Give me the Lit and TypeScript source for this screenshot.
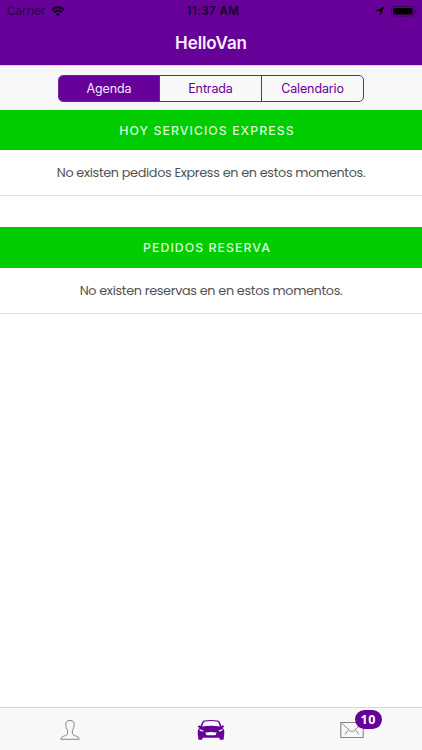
import { LitElement, html, css } from "lit";
import { customElement, state } from "lit/decorators.js";

@customElement("app-root")
export class AppRoot extends LitElement {
  @state() private segment = "Agenda";

  static styles = css`
    :host {
      display: flex;
      flex-direction: column;
      height: 100vh;
      overflow: hidden;
      background: #fff;
      font-family: Inter, "Liberation Sans", sans-serif;
    }
    * { box-sizing: border-box; }
    svg { display: block; }
    header { height: 65px; flex: none; background: #660099; }
    .status {
      height: 22px;
      display: grid;
      grid-template-columns: 1fr auto 1fr;
      align-items: center;
      padding: 0 5px 0 7px;
      font-size: 11.5px;
      color: #18002a;
    }
    .left, .right { display: flex; align-items: center; }
    .carrier { letter-spacing: 0.1px; color: #28043c; }
    .left svg { margin-left: 6px; }
    .right { justify-content: flex-end; gap: 6px; }
    .time { font-weight: 600; font-size: 11.5px; letter-spacing: 0.45px; padding-left: 2px; }
    h1 {
      margin: 0;
      height: 43px;
      line-height: 42px;
      text-align: center;
      font-size: 17px;
      font-weight: 600;
      letter-spacing: -0.1px;
      color: #f8eefc;
    }
    .segments {
      height: 45px;
      flex: none;
      display: flex;
      justify-content: center;
      align-items: center;
      background: #f8f8f8;
      border-top: 1px solid #e2cdec;
    }
    .group {
      display: grid;
      grid-template-columns: 100px 102px 102px;
      width: 306px;
      height: 27px;
      border: 1px solid #71219d;
      border-radius: 5px;
      overflow: hidden;
    }
    .group button {
      border: 0;
      padding: 1px 0 0;
      margin: 0;
      background: transparent;
      font: 400 12.5px Inter, "Liberation Sans", sans-serif;
      letter-spacing: -0.12px;
      color: #660099;
    }
    .group button + button { border-left: 1px solid #71219d; }
    .group .active { background: #660099; color: #f4e8fa; }
    main { flex: 1; }
    h2 {
      margin: 0;
      height: 40px;
      padding-right: 8px;
      line-height: 41px;
      background: #00cc00;
      color: #d9fbd9;
      text-align: center;
      font-size: 12.3px;
      font-weight: 500;
      letter-spacing: 1.05px;
      text-transform: uppercase;
    }
    section + section { margin-top: 31px; }
    section + section h2 { height: 41px; line-height: 42px; }
    p {
      margin: 0;
      height: 46px;
      line-height: 45px;
      border-bottom: 1px solid #e4e4e4;
      text-align: center;
      font-family: Poppins, Inter, sans-serif;
      font-size: 12.8px;
      letter-spacing: -0.33px;
      color: #525252;
    }
    nav {
      flex: none;
      height: 43px;
      display: grid;
      grid-template-columns: repeat(3, 1fr);
      justify-items: center;
      background: #f8f8f8;
      border-top: 1px solid #d9d9d9;
    }
    .tab { position: relative; padding-top: 11px; }
    .badge {
      position: absolute;
      left: 15px;
      top: 2px;
      width: 27px;
      height: 19px;
      border-radius: 10px;
      background: #660099;
      color: #fff;
      font: 700 12.5px/19px "Open Sans", "Noto Sans", sans-serif;
      letter-spacing: 0.4px;
      text-align: center;
    }
  `;

  render() {
    return html`
      <header>
        <div class="status">
          <div class="left">
            <span class="carrier">Carrier</span>
            <svg width="14" height="11" viewBox="0 0 14 11" fill="none" stroke="#14001f">
              <path d="M.8 4Q7-1.8 13.2 4M3 6.3Q7 2.6 11 6.3" stroke-width="2" />
              <path d="M4.7 8Q7 6 9.3 8L7 10.3Z" fill="#14001f" stroke="none" />
            </svg>
          </div>
          <span class="time">11:37 AM</span>
          <div class="right">
            <svg width="10" height="10" viewBox="0 0 10 10"><path d="M9.5.5 5.2 9.6V4.9H.5Z" fill="#000" /></svg>
            <svg width="26" height="11" viewBox="0 0 26 11">
              <rect x=".5" y=".5" width="22.5" height="9.6" rx="2" fill="none" stroke="#3a0759" />
              <rect x="2" y="2" width="19.5" height="6.6" rx=".7" fill="#000" />
              <path d="M24.2 3.6q1.5.3 1.5 1.7t-1.5 1.7Z" fill="#3a0759" />
            </svg>
          </div>
        </div>
        <h1>HelloVan</h1>
      </header>
      <div class="segments">
        <div class="group">
          ${["Agenda", "Entrada", "Calendario"].map(
            (name) => html`<button class=${name === this.segment ? "active" : ""}
              @click=${() => (this.segment = name)}>${name}</button>`
          )}
        </div>
      </div>
      <main>
        <section>
          <h2>Hoy servicios express</h2>
          <p>No existen pedidos Express en en estos momentos.</p>
        </section>
        <section>
          <h2>Pedidos reserva</h2>
          <p>No existen reservas en en estos momentos.</p>
        </section>
      </main>
      <nav>
        <div class="tab">
          <svg width="20" height="22" viewBox="0 0 20 22" fill="none" stroke="#858585" stroke-width="1">
            <path d="M10 1.500C7 1.500 5.600 3.200 5.800 5.800 6 8 6.400 9.500 7.600 11.500V14.500C7.600 17.200 1.300 16.200.8 20.300H19.200C18.700 16.200 12.400 17.200 12.400 14.500V11.500C13.600 9.500 14 8 14.200 5.800 14.400 3.200 13 1.500 10 1.500Z" />
          </svg>
        </div>
        <div class="tab">
          <svg width="28" height="22" viewBox="0 0 28 22">
            <path fill="#660099" d="M3.300 7.300 5.300 2.900Q5.900 1.600 7.200 1.400 14 .5 20.800 1.400q1.300.2 1.900 1.500L24.700 7.300Q25 6.400 26.300 6.600q1 .2.900 1.100-.2.800-1.600.8 1.700 2 1.700 4.800 0 3-.5 4.700V19.700q0 1-1 1H23.500q-1 0-1-1V18.700H5.500v1q0 1-1 1H2.200q-1 0-1-1V18Q.7 16.300.7 13.300q0-2.800 1.700-4.800Q1 8.500.8 7.700q-.1-.9.900-1.100Q3 6.400 3.300 7.300Z" />
            <path fill="#f8f8f8" d="M5 7.500 6.500 3.700Q6.900 2.700 7.900 2.500 14 1.700 20.100 2.500q1 .2 1.400 1.200L23 7.500Q14 6.200 5 7.500Z" />
            <path fill="#f8f8f8" d="M2 10.100 6.600 11.500Q6.300 12.500 5.200 12.500 2.500 12.600 2 10.100ZM26 10.100 21.400 11.500Q21.700 12.500 22.800 12.500 25.500 12.600 26 10.100ZM8.400 13.500Q14 12.400 19.600 13.500 19.300 16.300 17.500 16.300H10.500Q8.700 16.300 8.400 13.500Z" />
          </svg>
        </div>
        <div class="tab">
          <svg width="24" height="22" viewBox="0 0 24 22" fill="none" stroke="#858585">
            <path d="M.8 3.500h22.400v15H.8Z" stroke-width="1.100" />
            <path d="M1 3.700 10.800 12.300q1.200 1 2.400 0L23 3.700M5 15.500 8.400 11M19 15.500 15.600 11" stroke-width=".9" />
          </svg>
          <span class="badge">10</span>
        </div>
      </nav>
    `;
  }
}
